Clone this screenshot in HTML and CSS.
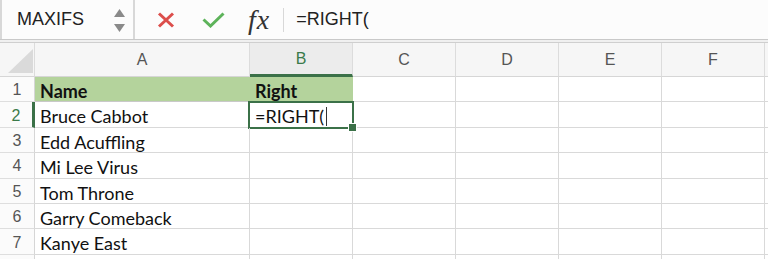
FILE: index.html
```html
<!DOCTYPE html>
<html lang="en">
<head>
	<meta charset="UTF-8" />
	<title>RIGHT formula</title>
	<link rel="stylesheet" href="styles.css">
</head>
<body>
	<div class="formula_bar">
		<div class="name_box">
			<span class="name">MAXIFS</span>
			<span class="spin">
				<svg width="11" height="8" viewBox="0 0 11 8"><polygon points="5.5,0 11,8 0,8" fill="#8a8a8a" /></svg>
				<svg width="11" height="8" viewBox="0 0 11 8"><polygon points="0,0 11,0 5.5,8" fill="#8a8a8a" /></svg>
			</span>
		</div>
		<div class="tools">
			<svg class="cancel" width="18" height="16" viewBox="0 0 18 16">
				<path d="M2 1.5 L16 14.5 M16 1.5 L2 14.5" stroke="#dc4e4b" stroke-width="3" fill="none" />
			</svg>
			<svg class="enter" width="23" height="16" viewBox="0 0 23 16">
				<path d="M1.5 7.5 L8.5 14 L21.5 1.5" stroke="#5db35a" stroke-width="3" fill="none" />
			</svg>
			<span class="fx">fx</span>
		</div>
		<div class="formula">=RIGHT(</div>
	</div>
	<div class="bar_rule"></div>

	<div class="sheet">
		<div class="corner"><div class="tri"></div></div>
		<div class="col_head">A</div>
		<div class="col_head active">B</div>
		<div class="col_head">C</div>
		<div class="col_head">D</div>
		<div class="col_head">E</div>
		<div class="col_head">F</div>
		<div class="col_head"></div>

		<div class="row_head">1</div>
		<div class="cell head">Name</div>
		<div class="cell head">Right</div>
		<div class="cell"></div><div class="cell"></div><div class="cell"></div><div class="cell"></div><div class="cell"></div>

		<div class="row_head active">2</div>
		<div class="cell">Bruce Cabbot</div>
		<div class="cell selected">=RIGHT(<span class="caret"></span><span class="handle"></span></div>
		<div class="cell"></div><div class="cell"></div><div class="cell"></div><div class="cell"></div><div class="cell"></div>

		<div class="row_head">3</div>
		<div class="cell">Edd Acuffling</div>
		<div class="cell"></div><div class="cell"></div><div class="cell"></div><div class="cell"></div><div class="cell"></div><div class="cell"></div>

		<div class="row_head">4</div>
		<div class="cell">Mi Lee Virus</div>
		<div class="cell"></div><div class="cell"></div><div class="cell"></div><div class="cell"></div><div class="cell"></div><div class="cell"></div>

		<div class="row_head">5</div>
		<div class="cell">Tom Throne</div>
		<div class="cell"></div><div class="cell"></div><div class="cell"></div><div class="cell"></div><div class="cell"></div><div class="cell"></div>

		<div class="row_head">6</div>
		<div class="cell">Garry Comeback</div>
		<div class="cell"></div><div class="cell"></div><div class="cell"></div><div class="cell"></div><div class="cell"></div><div class="cell"></div>

		<div class="row_head">7</div>
		<div class="cell">Kanye East</div>
		<div class="cell"></div><div class="cell"></div><div class="cell"></div><div class="cell"></div><div class="cell"></div><div class="cell"></div>

		<div class="row_head"></div>
		<div class="cell"></div><div class="cell"></div><div class="cell"></div><div class="cell"></div><div class="cell"></div><div class="cell"></div><div class="cell"></div>
	</div>
</body>
</html>
```

FILE: styles.css
```css
body{
	margin: 0;
	height: 259px;
	background-color: #fff;
	overflow: hidden;
	font-family: "Liberation Sans", Arial, sans-serif;
}

.formula_bar{
	display: flex;
	align-items: center;
	height: 39px;
	background-color: #fcfcfc;
}

.name_box{
	display: flex;
	align-items: center;
	justify-content: space-between;
	box-sizing: border-box;
	width: 135px;
	height: 100%;
	padding: 0 8px 0 15px;
	border-left: 2px solid #d8d8d8;
	border-right: 2px solid #d8d8d8;
}

.name{
	font-size: 18px;
	color: #222;
}

.spin{
	display: flex;
	flex-direction: column;
	gap: 7px;
	margin-top: 1px;
}

.tools{
	display: flex;
	align-items: center;
	height: 24px;
	padding-left: 22px;
	border-right: 1px solid #d8d8d8;
}

.cancel{
	margin-top: 1px;
}

.enter{
	margin-left: 27px;
	margin-top: 1px;
}

.fx{
	margin-left: 23px;
	margin-right: 13px;
	font-family: "Liberation Serif", "Times New Roman", serif;
	font-style: italic;
	font-size: 28px;
	letter-spacing: 1px;
	color: #333;
	line-height: 24px;
}

.formula{
	padding-left: 12px;
	font-size: 18px;
	color: #222;
}

.bar_rule{
	height: 2px;
	background-color: #f0f0f0;
	border-top: 1px solid #c9c9c9;
	border-bottom: 1px solid #cfcfcf;
}

.sheet{
	display: grid;
	grid-template-columns: 35px 215px repeat(5, 103px) 1fr;
	grid-template-rows: 34px repeat(8, 25.4px);
}

.corner, .col_head{
	box-sizing: border-box;
	background-color: #f6f6f6;
	border-right: 1px solid #dcdcdc;
	border-bottom: 1px solid #d6d6d6;
}

.corner{
	position: relative;
}

.tri{
	position: absolute;
	left: 8px;
	top: 6px;
	width: 25px;
	height: 24px;
	background-color: #dadada;
	clip-path: polygon(100% 0, 100% 100%, 0 100%);
}

.col_head{
	display: flex;
	align-items: center;
	justify-content: center;
	padding-top: 1px;
	font-size: 16px;
	color: #555;
}

.col_head.active{
	color: #3a7a4a;
	background-color: #ececec;
	border-bottom: 3px solid #3b7148;
}

.row_head{
	box-sizing: border-box;
	display: flex;
	align-items: center;
	justify-content: center;
	padding-top: 2px;
	font-size: 16px;
	color: #555;
	background-color: #fbfbfb;
	border-right: 1px solid #d6d6d6;
	border-bottom: 1px solid #dedede;
}

.row_head.active{
	color: #3a7a4a;
	border-right: 3px solid #3b7148;
}

.cell{
	position: relative;
	box-sizing: border-box;
	padding: 4px 0 0 5px;
	font-family: Lato, "Noto Sans", sans-serif;
	font-size: 18px;
	line-height: 21px;
	color: #111;
	white-space: nowrap;
	border-right: 1px solid #d9d9d9;
	border-bottom: 1px solid #d9d9d9;
}

.cell.head{
	font-weight: bold;
	background-color: #b4d39c;
	border-right-color: #b4d39c;
	border-bottom-color: #c9c9c9;
}

.cell.selected::after{
	content: "";
	position: absolute;
	left: -2px;
	top: -1px;
	right: -2px;
	bottom: -2px;
	border: 2px solid #3b7148;
}

.caret{
	display: inline-block;
	width: 1px;
	height: 19px;
	margin-left: 2px;
	vertical-align: -3px;
	background-color: #333;
}

.handle{
	position: absolute;
	right: -5px;
	bottom: -5px;
	width: 7px;
	height: 7px;
	background-color: #3b7148;
	border: 1px solid #fff;
	z-index: 1;
}
```
